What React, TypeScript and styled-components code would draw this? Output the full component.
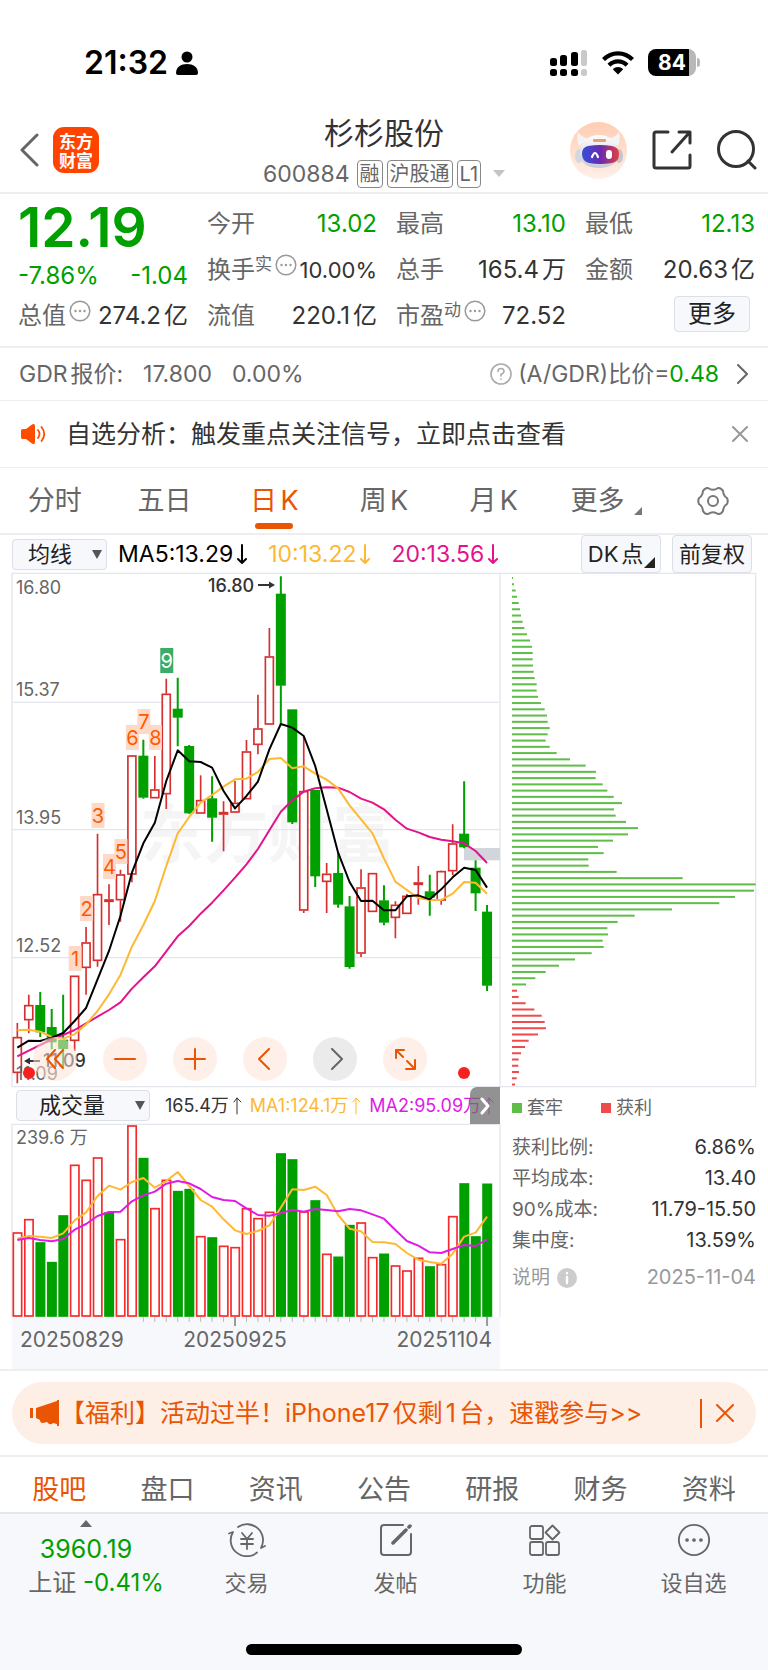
import React from "react";
import styled, { createGlobalStyle, css } from "styled-components";

const color = {
  green: "#00a000",
  orange: "#ea5504",
  amber: "#fdb933",
  magenta: "#e4128b",
  purple: "#e01be6",
  ink: "#333",
  gray: "#666",
  mute: "#999",
  line: "#eeeef0",
  panel: "#f7f8fb",
  edge: "#dcdfe8",
};

const GlobalStyle = createGlobalStyle`
  *, *::before, *::after { box-sizing: border-box; }
  body {
    margin: 0;
    background: #fff;
    color: ${color.ink};
    font-family: Inter, "Noto Sans CJK SC", sans-serif;
    font-size: 22px;
    line-height: 28px;
    text-autospace: normal;
  }
  button, select {
    margin: 0;
    padding: 0;
    border: 0;
    background: none;
    color: inherit;
    font: inherit;
    cursor: pointer;
  }
  a { color: inherit; text-decoration: none; }
  h1, p, dl, dd { margin: 0; }
  svg { display: block; flex: none; }
`;

/* ---------- status bar ---------- */

const StatusBar = styled.div`
  display: flex;
  justify-content: space-between;
  align-items: center;
  height: 108px;
  padding: 17px 68px 0 84px;
  color: #000;
`;

const StatusGroup = styled.div<{ $gap: number }>`
  display: flex;
  align-items: center;
  gap: ${(p) => p.$gap}px;
`;

const Clock = styled.span`
  font-size: 32px;
  font-weight: 600;
  line-height: 36px;
`;

const Battery = styled.span`
  position: relative;
  display: flex;
  justify-content: center;
  width: 48px;
  margin-right: 4px;
  border-radius: 8px;
  background: linear-gradient(90deg, #000 41px, #b8b8b8 41px);
  color: #fff;
  font-size: 21px;
  font-weight: 700;
  line-height: 27px;

  &::after {
    content: "";
    position: absolute;
    right: -4px;
    top: 9px;
    width: 3px;
    height: 9px;
    border-radius: 0 4px 4px 0;
    background: #b8b8b8;
  }
`;

/* ---------- header ---------- */

const Header = styled.header`
  display: grid;
  grid-template-columns: 1fr auto 1fr;
  align-items: center;
  height: 86px;
  padding: 0 11px;
  border-bottom: 2px solid ${color.line};
`;

const HeaderSide = styled.div<{ $end?: boolean }>`
  display: flex;
  align-items: center;
  gap: ${(p) => (p.$end ? 25 : 14)}px;
  padding-left: 9px;
  justify-content: ${(p) => (p.$end ? "flex-end" : "flex-start")};
`;

const Logo = styled.a`
  display: grid;
  place-content: center;
  width: 46px;
  height: 46px;
  border-radius: 11px;
  background: #ff4400;
  color: #fff;
  font-family: "Noto Sans CJK SC", sans-serif;
  font-size: 17px;
  font-weight: 700;
  line-height: 19px;
`;

const TitleBlock = styled.div`
  display: flex;
  flex-direction: column;
  align-items: center;
  gap: 9px;
  padding-top: 2px;
`;

const StockName = styled.h1`
  font-size: 30px;
  font-weight: 400;
  line-height: 36px;
`;

const CodeRow = styled.div`
  display: flex;
  align-items: center;
  gap: 4px;
  color: ${color.gray};
  line-height: 28px;
`;

const Code = styled.span`
  margin-right: 3px;
  font-size: 23px;
`;

const Tag = styled.span`
  padding: 0 2px;
  border: 1px solid #888;
  border-radius: 4px;
  font-size: 20px;
  line-height: 26px;
`;

const Caret = styled.i<{ $color?: string; $up?: boolean }>`
  width: 0;
  height: 0;
  border: solid transparent;
  border-width: 0 6px;
  ${(p) => (p.$up ? "border-bottom" : "border-top")}: 7px solid ${(p) => p.$color ?? "#c4c4c4"};
`;

const CodeCaret = styled(Caret)`
  margin-left: 8px;
`;

/* ---------- quote ---------- */

const Quote = styled.section`
  display: grid;
  grid-template-columns: repeat(4, 1fr);
  column-gap: 19px;
  padding: 7px 13px 7px 18px;
  border-bottom: 2px solid ${color.line};
`;

const QuoteColumn = styled.dl`
  display: flex;
  flex-direction: column;
`;

const LastPrice = styled.p`
  color: ${color.green};
  font-size: 55px;
  font-weight: 600;
  line-height: 53px;
`;

const Change = styled.p`
  display: flex;
  justify-content: space-between;
  color: ${color.green};
  font-size: 24px;
  line-height: 44px;
`;

const Metric = styled.div<{ $short?: boolean }>`
  display: flex;
  justify-content: space-between;
  align-items: center;
  height: ${(p) => (p.$short ? 36 : 46)}px;
  white-space: nowrap;
`;

const MetricLabel = styled.dt`
  display: flex;
  align-items: center;
  color: ${color.gray};
  font-size: 24px;
`;

const Superscript = styled.sup`
  padding-bottom: 12px;
  font-size: 17px;
  line-height: 20px;
  vertical-align: baseline;
`;

const HintButton = styled.button`
  padding: 0 0 10px 3px;
`;

const MetricValue = styled.dd<{ $down?: boolean; $tight?: boolean }>`
  color: ${(p) => (p.$down ? color.green : color.ink)};
  font-size: ${(p) => (p.$tight ? 22 : 24)}px;
`;

const MoreCell = styled.div`
  display: flex;
  justify-content: flex-end;
  align-items: center;
  height: 42px;
  padding-right: 5px;
`;

const boxed = css`
  border: 1px solid ${color.edge};
  border-radius: 4px;
  background: ${color.panel};
  color: #222;
`;

const MoreButton = styled.button`
  ${boxed}
  width: 76px;
  font-size: 24px;
  line-height: 34px;
`;

/* ---------- strips ---------- */

const GdrStrip = styled.section`
  display: flex;
  align-items: center;
  gap: 20px;
  padding: 12px 19px;
  border-bottom: 1px solid ${color.line};
  color: ${color.gray};
  font-size: 23px;
  white-space: nowrap;
`;

const GdrRatio = styled.a`
  display: flex;
  align-items: center;
  gap: 6px;
  margin-left: auto;
`;

const Down = styled.span`
  color: ${color.green};
`;

const GdrArrow = styled.span`
  margin-left: 12px;
`;

const Notice = styled.section`
  display: flex;
  align-items: center;
  gap: 19px;
  padding: 19px 20px;
  border-bottom: 1px solid ${color.line};
  font-size: 25px;
`;

const NoticeText = styled.a`
  flex: 1;
`;

/* ---------- tabs ---------- */

const PeriodTabs = styled.nav`
  display: grid;
  grid-template-columns: repeat(7, 1fr);
  height: 67px;
  border-bottom: 2px solid ${color.line};
`;

const PeriodTab = styled.button<{ $active?: boolean }>`
  position: relative;
  display: flex;
  justify-content: center;
  align-items: center;
  color: ${(p) => (p.$active ? color.orange : color.gray)};
  font-size: 27px;
  line-height: 40px;

  ${(p) =>
    p.$active &&
    css`
      &::after {
        content: "";
        position: absolute;
        bottom: 4px;
        width: 38px;
        height: 6px;
        border-radius: 3px;
        background: ${color.orange};
      }
    `}
`;

const MorePeriods = styled(PeriodTab)`
  gap: 10px;
  padding-left: 6px;
`;

const Corner = styled.i`
  align-self: flex-end;
  border-bottom: 8px solid #777;
  border-left: 8px solid transparent;
  margin-bottom: 18px;
`;

/* ---------- chart toolbars ---------- */

const MaBar = styled.div`
  display: flex;
  align-items: center;
  height: 38px;
  padding: 0 16px 0 12px;
  white-space: nowrap;
`;

const SelectBox = styled.div<{ $width: number }>`
  position: relative;
  width: ${(p) => p.$width}px;
  height: 31px;

  &::after {
    content: "";
    position: absolute;
    right: 5px;
    top: 11px;
    border: 5px solid transparent;
    border-top: 9px solid #555;
    border-bottom: 0;
    pointer-events: none;
  }
`;

const Select = styled.select<{ $indent: number }>`
  ${boxed}
  appearance: none;
  width: 100%;
  height: 100%;
  padding-left: ${(p) => p.$indent}px;
  line-height: 29px;
`;

const MaValues = styled.div`
  display: flex;
  flex: 1;
  gap: 21px;
  padding-left: 11px;
  font-size: 23px;
`;

const Reading = styled.span<{ $color: string }>`
  display: flex;
  align-items: center;
  gap: 4px;
  color: ${(p) => p.$color};
`;

const ChartButton = styled.button<{ $corner?: boolean }>`
  ${boxed}
  position: relative;
  width: 80px;
  margin-left: 11px;
  padding-right: ${(p) => (p.$corner ? 11 : 0)}px;
  line-height: 36px;
`;

const ButtonCorner = styled.i`
  position: absolute;
  right: 5px;
  bottom: 4px;
  border-bottom: 11px solid #222;
  border-left: 11px solid transparent;
`;

const VolumeBar = styled.div`
  position: relative;
  display: flex;
  align-items: center;
  height: 37px;
  padding-left: 4px;
  font-size: 18px;
  white-space: nowrap;
  overflow: hidden;
`;

const VolumeSelectBox = styled(SelectBox)`
  flex: none;
  font-size: 22px;
`;

const VolumeValues = styled.div`
  display: flex;
  gap: 8px;
  padding-left: 15px;
  text-autospace: no-autospace;
`;

const NextIndicator = styled.button`
  position: absolute;
  right: 0;
  top: 0;
  display: grid;
  place-items: center;
  width: 30px;
  height: 37px;
  border-radius: 7px 0 0 0;
  background: rgba(110, 110, 110, 0.75);
`;

/* ---------- charts ---------- */

const Charts = styled.section`
  display: grid;
  grid-template-columns: 488fr 256fr;
  margin: 0 12px;
`;

const Plot = styled.div`
  position: relative;
`;

const Canvas = styled.svg`
  width: 100%;
  height: auto;
  overflow: visible;
`;

const PlotControls = styled.div`
  position: absolute;
  left: 21px;
  bottom: 6px;
  display: flex;
  gap: 26px;
`;

const RoundButton = styled.button<{ $disabled?: boolean }>`
  display: grid;
  place-items: center;
  width: 44px;
  height: 44px;
  border-radius: 50%;
  background: ${(p) => (p.$disabled ? "rgba(226,226,226,.7)" : "rgba(253,228,215,.55)")};
`;

const ChipInfo = styled.div`
  padding: 8px 0 0 12px;
  color: ${color.gray};
  font-size: 18px;
`;

const Legend = styled.div`
  display: flex;
  gap: 38px;
  margin-bottom: 11px;
  line-height: 26px;
`;

const LegendItem = styled.span<{ $color: string }>`
  display: flex;
  align-items: center;
  gap: 5px;

  &::before {
    content: "";
    width: 10px;
    height: 10px;
    background: ${(p) => p.$color};
  }
`;

const ChipRow = styled.div<{ $muted?: boolean }>`
  display: flex;
  justify-content: space-between;
  margin-top: ${(p) => (p.$muted ? 6 : 0)}px;
  color: ${(p) => (p.$muted ? color.mute : color.gray)};
  font-size: 19px;
  line-height: 31px;
`;

const ChipValue = styled.dd<{ $muted?: boolean }>`
  color: ${(p) => (p.$muted ? color.mute : color.ink)};
  font-size: 20px;
`;

const ChipLabel = styled.dt`
  display: flex;
  align-items: center;
  gap: 7px;
`;

/* ---------- promo and bottom ---------- */

const Promo = styled.section`
  padding: 11px 12px;
  border: solid ${color.line};
  border-width: 2px 0;
`;

const PromoPill = styled.div`
  display: flex;
  align-items: center;
  height: 62px;
  padding: 0 22px 0 18px;
  border-radius: 31px;
  background: #fdeee6;
  color: ${color.orange};
  font-size: 25px;
`;

const PromoText = styled.a`
  flex: 1;
  white-space: nowrap;
`;

const PromoClose = styled.button`
  display: flex;
  align-items: center;
  height: 29px;
  padding-left: 14px;
  border-left: 2px solid ${color.orange};
`;

const InfoTabs = styled.nav`
  display: grid;
  grid-template-columns: repeat(7, 1fr);
  padding: 13px 5px 2px;
  border-bottom: 2px solid #e6e7ea;
`;

const InfoTab = styled.a<{ $active?: boolean }>`
  color: ${(p) => (p.$active ? color.orange : color.gray)};
  font-size: 27px;
  line-height: 40px;
  text-align: center;
`;

const BottomBar = styled.footer`
  background: ${color.panel};
`;

const Actions = styled.nav`
  display: grid;
  grid-template-columns: 172fr repeat(4, 149fr);
  color: ${color.gray};
`;

const IndexCell = styled.a`
  display: flex;
  flex-direction: column;
  align-items: center;
  padding-top: 6px;
  font-size: 24px;
  line-height: 34px;
  white-space: nowrap;
`;

const IndexValue = styled.p`
  margin-top: 5px;
  color: ${color.green};
  font-size: 25px;
`;

const IndexChange = styled.p`
  padding-left: 20px;
`;

const Action = styled.button`
  display: flex;
  flex-direction: column;
  align-items: center;
  gap: 12px;
  padding-top: 9px;
`;

const HomeIndicator = styled.div`
  width: 276px;
  height: 11px;
  margin: 44px auto 0;
  border-radius: 6px;
  background: #000;
`;

const HomeArea = styled.div`
  padding-bottom: 15px;
`;

/* ---------- chart data: three units to a pixel ---------- */

const STEP = 34.37;
const cx = (i: number) => 16 + STEP * i;

type Candle = [up: 0 | 1, high: number, top: number, bottom: number, low: number];

const candles: Candle[] = [
  [1, 1350, 1392, 1500, 1531], [1, 1265, 1296, 1342, 1381], [0, 1257, 1297, 1377, 1392],
  [0, 1308, 1363, 1407, 1429], [0, 1265, 1401, 1427, 1481], [1, 1208, 1208, 1404, 1434],
  [1, 1062, 1108, 1185, 1265], [1, 782, 963, 1164, 1181], [1, 934, 979, 987, 1056],
  [1, 890, 904, 982, 1046], [1, 547, 547, 905, 928], [0, 500, 549, 673, 677],
  [1, 549, 649, 676, 676], [1, 317, 362, 664, 708], [0, 314, 408, 433, 520],
  [0, 516, 520, 720, 722], [1, 607, 681, 722, 722], [0, 610, 677, 733, 806],
  [1, 685, 717, 725, 835], [1, 624, 689, 719, 719], [1, 501, 535, 679, 679],
  [1, 365, 466, 516, 544], [1, 165, 250, 455, 455], [0, 10, 63, 337, 454],
  [0, 410, 410, 747, 753], [1, 491, 654, 1013, 1020], [0, 652, 652, 909, 942],
  [1, 870, 902, 927, 1020], [0, 839, 901, 994, 1004], [0, 969, 1001, 1181, 1187],
  [1, 889, 943, 1142, 1152], [1, 900, 900, 1017, 1017], [0, 937, 983, 1048, 1057],
  [1, 985, 995, 1035, 1096], [1, 963, 968, 1023, 1023], [1, 879, 928, 936, 995],
  [0, 905, 956, 973, 1028], [1, 893, 894, 983, 995], [1, 754, 811, 895, 907],
  [0, 625, 783, 822, 826], [0, 862, 885, 960, 1014], [0, 996, 1017, 1237, 1254],
];

const ma5 = [1424, 1403, 1404, 1394, 1380, 1344, 1305, 1219, 1134, 1029, 899, 811, 749, 624, 532, 565, 567, 584, 654, 706, 669, 626, 529, 453, 464, 489, 579, 709, 839, 927, 984, 983, 1012, 1012, 970, 967, 979, 949, 913, 884, 891, 944];
const ma10 = [1372, 1370, 1376, 1392, 1397, 1384, 1354, 1314, 1264, 1206, 1121, 1056, 984, 879, 781, 732, 689, 666, 641, 619, 617, 597, 558, 555, 586, 580, 602, 620, 646, 697, 739, 781, 856, 926, 951, 975, 981, 981, 962, 927, 929, 962];
const ma20 = [1450, 1433, 1416, 1399, 1386, 1371, 1351, 1331, 1311, 1288, 1247, 1213, 1180, 1135, 1090, 1059, 1022, 989, 952, 914, 874, 828, 772, 716, 682, 656, 646, 643, 644, 657, 677, 689, 709, 740, 767, 778, 792, 800, 805, 811, 834, 870];

const volumes = [253, 293, 223, 164, 304, 456, 411, 478, 313, 233, 574, 476, 326, 411, 377, 383, 242, 238, 213, 209, 326, 296, 315, 490, 472, 316, 349, 189, 180, 275, 283, 179, 189, 154, 139, 177, 151, 158, 302, 400, 241, 399];
const volMa1 = [234, 242, 240, 236, 250, 289, 313, 362, 393, 381, 404, 416, 387, 407, 434, 392, 350, 330, 292, 259, 248, 257, 274, 327, 382, 380, 390, 365, 305, 264, 256, 224, 223, 218, 191, 171, 164, 159, 189, 240, 252, 300];
const volMa2 = [230, 236, 230, 226, 233, 261, 278, 302, 314, 315, 346, 364, 375, 399, 407, 400, 383, 359, 350, 347, 325, 305, 303, 310, 321, 315, 323, 320, 316, 323, 319, 307, 294, 260, 227, 213, 193, 191, 203, 215, 212, 232];
const volumeDown = new Set([2, 3, 4, 8, 11, 14, 15, 17, 23, 24, 26, 28, 29, 32, 36, 39, 40, 41]);

const chips = [3, 6, 11, 15, 20, 24, 27, 32, 37, 45, 54, 60, 62, 62, 63, 65, 68, 74, 74, 78, 87, 98, 105, 107, 113, 107, 101, 113, 134, 174, 221, 252, 251, 272, 286, 305, 330, 306, 311, 342, 378, 348, 303, 258, 275, 229, 230, 314, 512, 731, 726, 669, 622, 480, 368, 317, 286, 288, 272, 275, 239, 189, 141, 101, 70, 42, 15, 20, 41, 67, 89, 98, 102, 78, 50, 39, 27, 20, 19, 21, 14, 9];
const TRAPPED = 66;

const signals = [
  { n: 1, i: 5, y: 373 }, { n: 2, i: 6, y: 323 }, { n: 3, i: 7, y: 230 },
  { n: 4, i: 8, y: 281 }, { n: 5, i: 9, y: 266 }, { n: 6, i: 10, y: 152 },
  { n: 7, i: 11, y: 136 }, { n: 8, i: 12, y: 152 }, { n: 9, i: 13, y: 75 },
];

const toPoints = (values: number[], base = 0) =>
  values.map((v, i) => `${cx(i)},${base ? base - v : v}`).join(" ");

function PriceChart() {
  return (
    <Canvas viewBox="0 0 488 514" role="img" aria-label="日K线图">
      <text x="128" y="284" fontSize="64" fontWeight="700" fill="#f5f5f6">东方财富</text>
      <g transform="scale(.33333)">
        <g stroke="#e4e6ee" strokeWidth="4" fill="none">
          <path d="M0 1H1464V1541H0Z" />
          <path d="M0 388H1464M0 770H1464M0 1154H1464" />
        </g>
        <rect x="1356" y="825" width="108" height="37" fill="#d2d5dc" />
        {candles.map(([up, high, top, bottom, low], i) => (
          <g key={i} stroke={up ? "#d5302f" : color.green} strokeWidth={up ? 5 : 6}>
            <path d={`M${cx(i)} ${high}V${top}M${cx(i)} ${bottom}V${low}`} />
            <rect
              x={cx(i) - 12}
              y={top + 2}
              width="24"
              height={Math.max(bottom - top - 4, 3)}
              fill={up ? "#fff" : color.green}
            />
          </g>
        ))}
        <g fill="none" strokeWidth="6" strokeLinejoin="round">
          <polyline points={toPoints(ma20)} stroke={color.magenta} />
          <polyline points={toPoints(ma10)} stroke={color.amber} />
          <polyline points={toPoints(ma5)} stroke="#000" />
        </g>
      </g>
      {signals.map(({ n, i, y }) => (
        <g key={n}>
          <rect x={cx(i) / 3 - 6} y={y} width="13" height="25" fill={n === 9 ? "#3bab66" : "#ffd9c8"} />
          <text
            x={cx(i) / 3 + 0.5}
            y={y + 20}
            fontSize="20"
            textAnchor="middle"
            fill={n === 9 ? "#fff" : "#ff5a00"}
          >
            {n}
          </text>
        </g>
      ))}
      <g fontSize="18" fill={color.gray}>
        <text x="4" y="21">16.80</text>
        <text x="4" y="123">15.37</text>
        <text x="4" y="251">13.95</text>
        <text x="4" y="379">12.52</text>
        <text x="4" y="507">11.09</text>
      </g>
      <g fontSize="18" fontWeight="500" fill={color.ink}>
        <text x="196" y="19">16.80</text>
        <text x="31" y="494">11.09</text>
      </g>
      <path d="M246 12H258M28 488H16" stroke={color.ink} strokeWidth="2" />
      <path d="M257 8.500L263 12L257 15.500ZM18 484.500L12 488L18 491.500Z" fill={color.ink} />
      <circle cx="17" cy="500" r="6" fill="#f6201f" />
      <circle cx="452" cy="500" r="6" fill="#f6201f" />
    </Canvas>
  );
}

function VolumeChart() {
  return (
    <Canvas viewBox="0 0 488 193" role="img" aria-label="成交量图">
      <g transform="scale(.33333)">
        <path d="M0 578V1H1464V578" fill="none" stroke="#e4e6ee" strokeWidth="4" />
        {volumes.map((v, i) => {
          const down = volumeDown.has(i);
          return (
            <rect
              key={i}
              x={cx(i) - 12}
              y={580 - v}
              width="25"
              height={v - 4}
              fill={down ? color.green : "#fff"}
              stroke={down ? color.green : "#f52a2a"}
              strokeWidth="5"
            />
          );
        })}
        <g fill="none" strokeWidth="6" strokeLinejoin="round">
          <polyline points={toPoints(volMa1, 578)} stroke={color.amber} />
          <polyline points={toPoints(volMa2, 578)} stroke={color.purple} />
        </g>
      </g>
      <text x="4" y="20" fontSize="18" fill={color.gray}>239.6 万</text>
    </Canvas>
  );
}

function DateAxis() {
  return (
    <Canvas viewBox="0 0 488 52" role="img" aria-label="日期">
      <rect width="488" height="52" fill={color.panel} />
      {volumes.map((_, i) => {
        const major = i === 19 || i === 41;
        return i > 10 ? (
          <path
            key={i}
            d={`M${cx(i) / 3} 0V${major ? 9 : 5}`}
            stroke={major ? "#999" : "#bbb"}
            strokeWidth={major ? 2 : 1}
          />
        ) : null;
      })}
      <g fontSize="21" fill={color.gray}>
        <text x="8" y="30">20250829</text>
        <text x="223" y="30" textAnchor="middle">20250925</text>
        <text x="480" y="30" textAnchor="end">20251104</text>
      </g>
    </Canvas>
  );
}

function ChipChart() {
  return (
    <Canvas viewBox="0 0 256 514" role="img" aria-label="筹码分布">
      <g transform="scale(.33333)">
        <path d="M0 1H767V1541H0" fill="none" stroke="#e4e6ee" strokeWidth="4" />
        {chips.map((w, i) => (
          <rect
            key={i}
            x="36"
            y={12 + i * 18.76}
            width={w}
            height="6"
            fill={i < TRAPPED ? "#5fbd48" : "#ef4b4b"}
          />
        ))}
      </g>
    </Canvas>
  );
}

/* ---------- icons ---------- */

const Stroke = ({ w, h, d, c = "currentColor", s = 2 }: { w: number; h: number; d: string; c?: string; s?: number }) => (
  <svg width={w} height={h} viewBox={`0 0 ${w} ${h}`} fill="none" stroke={c} strokeWidth={s} strokeLinecap="round" strokeLinejoin="round" aria-hidden="true">
    <path d={d} />
  </svg>
);

const DotsCircle = ({ size = 22, c = "#999" }: { size?: number; c?: string }) => (
  <svg width={size} height={size} viewBox="0 0 22 22" aria-hidden="true">
    <circle cx="11" cy="11" r="9.800" fill="none" stroke={c} strokeWidth={size > 22 ? 1.2 : 1.5} />
    <g fill={c}>
      <circle cx="6.500" cy="11" r="1.200" /><circle cx="11" cy="11" r="1.200" /><circle cx="15.500" cy="11" r="1.200" />
    </g>
  </svg>
);

const Person = () => (
  <svg width="22" height="24" viewBox="0 0 22 24" aria-hidden="true">
    <circle cx="11" cy="6" r="5.500" /><path d="M0 22C0 16 5 13 11 13S22 16 22 22Q22 24 20 24H2Q0 24 0 22Z" />
  </svg>
);

const Signal = () => (
  <svg width="38" height="26" viewBox="0 0 38 26" aria-hidden="true">
    <rect x="0" y="8" width="7" height="8" rx="2.500" />
    <rect x="10" y="5" width="7" height="11" rx="2.500" />
    <rect x="21" y="2" width="7" height="14" rx="2.500" />
    <rect x="31" y="0" width="6" height="16" rx="2.500" fill="#c9c9c9" />
    <rect x="0" y="19" width="7" height="7" rx="2.500" />
    <rect x="10" y="19" width="7" height="7" rx="2.500" />
    <rect x="21" y="19" width="7" height="7" rx="2.500" />
    <rect x="31" y="19" width="6" height="7" rx="2.500" fill="#c9c9c9" />
  </svg>
);

const Wifi = () => (
  <svg width="32" height="24" viewBox="0 0 32 24" aria-hidden="true">
    <g fill="none" stroke="#000" strokeWidth="4.200">
      <path d="M1.500 8.500C9.500 .2 22.500 .2 30.500 8.500" /><path d="M7 14.200C12 9 20 9 25 14.200" />
    </g>
    <path d="M16 23.500L10.800 18.200C13.800 15.400 18.200 15.400 21.200 18.200Z" />
  </svg>
);

const Robot = () => (
  <svg width="57" height="57" viewBox="0 0 57 57" aria-hidden="true">
    <defs>
      <linearGradient id="halo" x2="0" y2="1"><stop stopColor="#ffcdb2" /><stop offset="1" stopColor="#fff0e8" /></linearGradient>
      <linearGradient id="shell" x2="0" y2="1"><stop stopColor="#fdfdff" /><stop offset="1" stopColor="#c9cbd4" /></linearGradient>
      <linearGradient id="visor"><stop stopColor="#3550d8" /><stop offset=".5" stopColor="#6a2bb0" /><stop offset="1" stopColor="#e4403c" /></linearGradient>
    </defs>
    <circle cx="28.500" cy="28.500" r="28.500" fill="url(#halo)" />
    <path d="M8 10Q6 15 9 24L18 17Q10 14 8 10ZM49 10Q51 15 48 24L39 17Q47 14 49 10Z" fill="#f4f4f8" />
    <ellipse cx="9" cy="34" rx="4" ry="7" fill="#d5d7df" /><ellipse cx="49" cy="34" rx="4" ry="7" fill="#c5c6ce" />
    <path d="M29 13C40 13 48 20 48 31C48 41 41 46 29 46S10 41 10 31C10 20 18 13 29 13Z" fill="url(#shell)" />
    <rect x="23" y="17" width="13" height="3" rx="1" fill="#e8a06a" />
    <path d="M18 24Q30 22 42 24Q49 25 49 32Q49 40 42 41Q30 43 19 41Q12 39 12 32Q12 25 18 24Z" fill="url(#visor)" />
    <path d="M22 35Q25 27 28 35" fill="none" stroke="#fff" strokeWidth="2.200" strokeLinecap="round" />
    <rect x="36" y="28" width="6" height="9" rx="3" fill="#fff" />
  </svg>
);

const Share = () => <Stroke w={40} h={40} s={3} c="#333" d="M16 2H4Q2 2 2 4V36Q2 38 4 38H36Q38 38 38 36V25M27 2H38V13M37 3L20 22" />;

const Search = () => (
  <svg width="40" height="40" viewBox="0 0 40 40" fill="none" stroke="#333" strokeWidth="3" strokeLinecap="round" aria-hidden="true">
    <circle cx="19" cy="19" r="17.500" /><path d="M31 31L38 38" />
  </svg>
);

const Speaker = () => (
  <svg width="27" height="22" viewBox="0 0 27 22" aria-hidden="true">
    <path d="M1 7.500Q1 6 3 6H6L12 1.500Q15 0 15 3V19Q15 22 12 20.500L6 16H3Q1 16 1 14.500Z" fill="#ff4d00" />
    <path d="M18 7Q21 11 18 15M21.500 4Q27 11 21.500 18" fill="none" stroke="#ff4d00" strokeWidth="1.800" strokeLinecap="round" />
  </svg>
);

const Gear = () => (
  <svg width="32" height="30" viewBox="0 0 32 30" fill="none" stroke="#777" strokeWidth="2" strokeLinejoin="round" aria-hidden="true">
    <path d="M11 2Q16 5.500 21 2Q24 1.500 26 5Q26.500 10 30 12Q31.500 15 30 18Q26.500 20 26 25Q24 28.500 21 28Q16 24.500 11 28Q8 28.500 6 25Q5.500 20 2 18Q.5 15 2 12Q5.500 10 6 5Q8 1.500 11 2Z" />
    <circle cx="16" cy="15" r="5" />
  </svg>
);

const Megaphone = () => (
  <svg width="30" height="26" viewBox="0 0 30 26" fill={color.orange} aria-hidden="true">
    <path d="M0 8H3V18H0ZM6 8L27 1V0H29V26H27V24L23 23Q20 26 17 22L13 23Q10 23 10 20L6 18Z" />
  </svg>
);

const Trade = () => (
  <svg width="40" height="34" viewBox="0 0 40 34" fill="none" stroke="#666" strokeWidth="1.800" strokeLinecap="round" strokeLinejoin="round" aria-hidden="true">
    <path d="M11 4A16 16 0 0 1 34 25L38 23M30 29.500A16 16 0 0 1 6 9L2 10.500" />
    <path d="M15 10L20 16L25 10M20 16V26M14 16H26M14 21H26" />
  </svg>
);

const Compose = () => (
  <svg width="34" height="34" viewBox="0 0 34 34" fill="none" stroke="#666" strokeWidth="2" strokeLinecap="round" aria-hidden="true">
    <path d="M24 2H5Q2 2 2 5V29Q2 32 5 32H29Q32 32 32 29V11" />
    <path d="M14 20L27 7M31 3L30 4" strokeWidth="3.500" />
  </svg>
);

const Apps = () => (
  <svg width="34" height="34" viewBox="0 0 34 34" fill="none" stroke="#666" strokeWidth="1.800" strokeLinejoin="round" aria-hidden="true">
    <rect x="2" y="3" width="13" height="13" rx="2" /><rect x="2" y="19" width="13" height="13" rx="2" /><rect x="18" y="19" width="13" height="13" rx="2" />
    <path d="M24.500 2.500L31.500 9.500L24.500 16.500L17.500 9.500Z" />
  </svg>
);

const Arrow = () => <Stroke w={10} h={22} d="M5 2V20M1 16L5 20L9 16" />;
const SmallArrowUp = () => <Stroke w={9} h={18} s={1} d="M4 17V1M1 5L4 1L8 5" />;

const Question = () => (
  <svg width="22" height="22" viewBox="0 0 22 22" fill="none" stroke="#aaa" strokeWidth="1.600" strokeLinecap="round" aria-hidden="true">
    <circle cx="11" cy="11" r="10" /><path d="M8 8.500Q8 5.500 11 5.500T14 8.500Q14 10 11 11.500V13M11 16V16.200" />
  </svg>
);

const InfoDot = () => (
  <svg width="20" height="20" viewBox="0 0 20 20" aria-hidden="true">
    <circle cx="10" cy="10" r="10" fill="#ccc" /><path d="M10 5V5.200M10 9V15" stroke="#fff" strokeWidth="2.400" strokeLinecap="round" />
  </svg>
);

/* ---------- page ---------- */

type StatProps = {
  label: string;
  value: string;
  sup?: string;
  hint?: boolean;
  down?: boolean;
  short?: boolean;
  tight?: boolean;
};

function Stat({ label, value, sup, hint, down, short, tight }: StatProps) {
  return (
    <Metric $short={short}>
      <MetricLabel>
        {label}
        {sup && <Superscript>{sup}</Superscript>}
        {hint && <HintButton aria-label={`${label}说明`}><DotsCircle /></HintButton>}
      </MetricLabel>
      <MetricValue $down={down} $tight={tight}>{value}</MetricValue>
    </Metric>
  );
}

const infoTabs = ["股吧", "盘口", "资讯", "公告", "研报", "财务", "资料"];

export default function App() {
  return (
    <>
      <GlobalStyle />
      <StatusBar>
        <StatusGroup $gap={8}><Clock>21:32</Clock><Person /></StatusGroup>
        <StatusGroup $gap={14}><Signal /><Wifi /><Battery>84</Battery></StatusGroup>
      </StatusBar>

      <Header>
        <HeaderSide>
          <button aria-label="返回"><Stroke w={19} h={34} s={3} c="#666" d="M17 2L2 17L17 32" /></button>
          <Logo href="#"><span>东方</span><span>财富</span></Logo>
        </HeaderSide>
        <TitleBlock>
          <StockName>杉杉股份</StockName>
          <CodeRow>
            <Code>600884</Code>
            <Tag>融</Tag><Tag>沪股通</Tag><Tag>L1</Tag>
            <CodeCaret />
          </CodeRow>
        </TitleBlock>
        <HeaderSide $end>
          <button aria-label="智能助手"><Robot /></button>
          <button aria-label="分享"><Share /></button>
          <button aria-label="搜索"><Search /></button>
        </HeaderSide>
      </Header>

      <main>
        <Quote>
          <QuoteColumn as="div">
            <LastPrice>12.19</LastPrice>
            <Change><span>-7.86%</span><span>-1.04</span></Change>
            <dl><Stat label="总值" hint value="274.2亿" short /></dl>
          </QuoteColumn>
          <QuoteColumn>
            <Stat label="今开" value="13.02" down />
            <Stat label="换手" sup="实" hint value="10.00%" tight />
            <Stat label="流值" value="220.1亿" />
          </QuoteColumn>
          <QuoteColumn>
            <Stat label="最高" value="13.10" down />
            <Stat label="总手" value="165.4万" />
            <Stat label="市盈" sup="动" hint value="72.52" />
          </QuoteColumn>
          <QuoteColumn as="div">
            <dl>
              <Stat label="最低" value="12.13" down />
              <Stat label="金额" value="20.63亿" />
            </dl>
            <MoreCell><MoreButton>更多</MoreButton></MoreCell>
          </QuoteColumn>
        </Quote>

        <GdrStrip>
          <span>GDR报价:</span><span>17.800</span><span>0.00%</span>
          <GdrRatio href="#">
            <Question />
            <span>(A/GDR)比价=<Down>0.48</Down></span>
            <GdrArrow><Stroke w={12} h={20} c="#666" d="M1 1L10 10L1 19" /></GdrArrow>
          </GdrRatio>
        </GdrStrip>

        <Notice>
          <Speaker />
          <NoticeText href="#">自选分析：触发重点关注信号，立即点击查看</NoticeText>
          <button aria-label="关闭"><Stroke w={16} h={16} c="#999" d="M1 1L15 15M15 1L1 15" /></button>
        </Notice>

        <PeriodTabs>
          <PeriodTab>分时</PeriodTab>
          <PeriodTab>五日</PeriodTab>
          <PeriodTab $active>日K</PeriodTab>
          <PeriodTab>周K</PeriodTab>
          <PeriodTab>月K</PeriodTab>
          <MorePeriods>更多<Corner /></MorePeriods>
          <PeriodTab aria-label="设置"><Gear /></PeriodTab>
        </PeriodTabs>

        <MaBar>
          <SelectBox $width={95}>
            <Select $indent={15} aria-label="主图指标"><option>均线</option></Select>
          </SelectBox>
          <MaValues>
            <Reading $color="#000">MA5:13.29<Arrow /></Reading>
            <Reading $color={color.amber}>10:13.22<Arrow /></Reading>
            <Reading $color={color.magenta}>20:13.56<Arrow /></Reading>
          </MaValues>
          <ChartButton $corner>DK点<ButtonCorner /></ChartButton>
          <ChartButton>前复权</ChartButton>
        </MaBar>

        <Charts>
          <div>
            <Plot>
              <PriceChart />
              <PlotControls>
                <RoundButton aria-label="最早"><Stroke w={20} h={20} c={color.orange} d="M10 1L2 10L10 19M18 1L10 10L18 19" /></RoundButton>
                <RoundButton aria-label="缩小"><Stroke w={22} h={22} c={color.orange} d="M1 11H21" /></RoundButton>
                <RoundButton aria-label="放大"><Stroke w={22} h={22} c={color.orange} d="M1 11H21M11 1V21" /></RoundButton>
                <RoundButton aria-label="前移"><Stroke w={22} h={22} c={color.orange} d="M15 1L5 11L15 21" /></RoundButton>
                <RoundButton aria-label="后移" $disabled><Stroke w={22} h={22} c="#666" d="M8 1L18 11L8 21" /></RoundButton>
                <RoundButton aria-label="全屏"><Stroke w={22} h={22} c={color.orange} d="M10 2H2V10M2 2L9 9M12 21H21V12M21 21L13 13" /></RoundButton>
              </PlotControls>
            </Plot>
            <VolumeBar>
              <VolumeSelectBox $width={134}>
                <Select $indent={22} aria-label="副图指标"><option>成交量</option></Select>
              </VolumeSelectBox>
              <VolumeValues>
                <Reading $color={color.ink}>165.4万<SmallArrowUp /></Reading>
                <Reading $color={color.amber}>MA1:124.1万<SmallArrowUp /></Reading>
                <Reading $color={color.purple}>MA2:95.09万<SmallArrowUp /></Reading>
              </VolumeValues>
              <NextIndicator aria-label="更多指标"><Stroke w={10} h={18} s={3} c="#fff" d="M2 2L8 9L2 16" /></NextIndicator>
            </VolumeBar>
            <VolumeChart />
            <DateAxis />
          </div>
          <div>
            <ChipChart />
            <ChipInfo>
              <Legend>
                <LegendItem $color="#5fbd48">套牢</LegendItem>
                <LegendItem $color="#ef4b4b">获利</LegendItem>
              </Legend>
              <dl>
                <ChipRow><ChipLabel>获利比例:</ChipLabel><ChipValue>6.86%</ChipValue></ChipRow>
                <ChipRow><ChipLabel>平均成本:</ChipLabel><ChipValue>13.40</ChipValue></ChipRow>
                <ChipRow><ChipLabel>90%成本:</ChipLabel><ChipValue>11.79-15.50</ChipValue></ChipRow>
                <ChipRow><ChipLabel>集中度:</ChipLabel><ChipValue>13.59%</ChipValue></ChipRow>
                <ChipRow $muted><ChipLabel>说明<InfoDot /></ChipLabel><ChipValue $muted>2025-11-04</ChipValue></ChipRow>
              </dl>
            </ChipInfo>
          </div>
        </Charts>

        <Promo>
          <PromoPill>
            <Megaphone />
            <PromoText href="#">【福利】活动过半！iPhone17仅剩1台，速戳参与&gt;&gt;</PromoText>
            <PromoClose aria-label="关闭"><Stroke w={18} h={18} d="M1 1L17 17M17 1L1 17" /></PromoClose>
          </PromoPill>
        </Promo>

        <InfoTabs>
          {infoTabs.map((name, i) => (
            <InfoTab key={name} href="#" $active={i === 0}>{name}</InfoTab>
          ))}
        </InfoTabs>
      </main>

      <BottomBar>
        <Actions>
          <IndexCell href="#">
            <Caret $up $color="#666" />
            <IndexValue>3960.19</IndexValue>
            <IndexChange>上证 <Down>-0.41%</Down></IndexChange>
          </IndexCell>
          <Action><Trade />交易</Action>
          <Action><Compose />发帖</Action>
          <Action><Apps />功能</Action>
          <Action><DotsCircle size={34} c="#666" />设自选</Action>
        </Actions>
        <HomeArea><HomeIndicator /></HomeArea>
      </BottomBar>
    </>
  );
}
